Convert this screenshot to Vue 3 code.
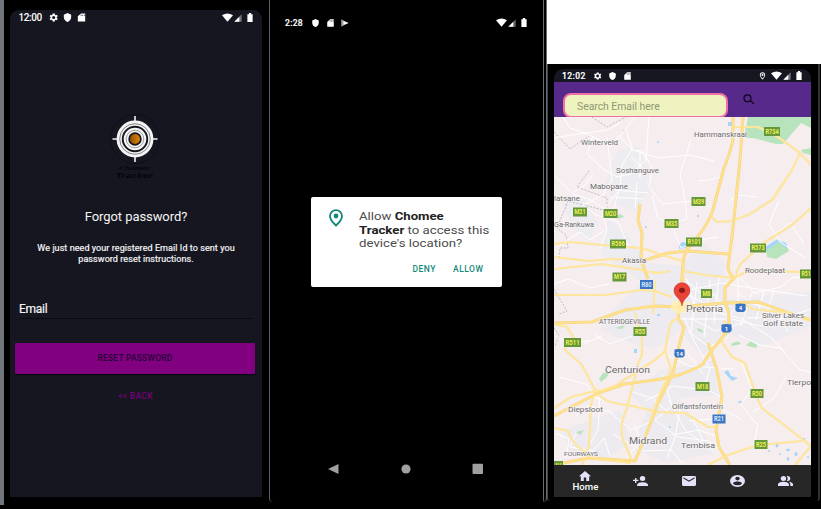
<script setup>
const majorRoads = [
  'M743 117L740 160L732 237L728 267Q729 274 734 278L725 288V303Q732 317 727 332L712 350L702 365Q687 373 672 377L655 380L625 384L598 393L575 405L554 416',
  'M733 117V140Q730 154 724 168L712 213Q704 231 692 243Q683 253 683 265L680 307',
  'M645 260L668 253L688 251L728 254',
  'M640 204L638 220L642 233L641 260L648 279',
  'M554 323L592 322L625 310L655 306L678 307L725 303L758 302Q785 312 811 320',
  'M680 307L678 318L684 327L678 350L673 373L658 403L648 430L635 461L605 459L588 458L554 465',
  'M708 343L717 370L722 397L716 430L719 447L730 465'
]
const roads = [
  'M712 217L717 222L732 221L750 214L772 200L792 170',
  'M811 208L792 225L765 242L745 260Q737 265 736 278',
  'M554 244L570 242L612 246L642 248L662 255L682 261L684 281',
  'M554 257L588 261L612 259L645 261M554 269L602 264L642 270Q655 275 670 271',
  'M683 271L705 275L734 278L748 271L811 272',
  'M554 295L605 295L642 290L655 291L672 297',
  'M655 281L653 314M678 319Q670 320 669 330L665 350L671 369L659 396L650 422',
  'M635 313L642 337V355Q636 366 635 377L627 408Q617 430 625 444L632 461',
  'M554 324L567 327L574 338L565 340L565 350L582 365L595 390L591 405L589 446L582 465',
  'M554 428L568 431Q572 443 582 450L595 459L631 463',
  'M598 393Q603 403 628 405L658 412L685 413L708 427L718 427',
  'M597 392L615 386L655 360L666 350',
  'M725 320L722 342L732 357L745 363L755 393L762 408L811 446L795 465',
  'M708 465L728 455L758 445L802 441',
  'M733 127L758 127L778 137L800 153L811 165M800 153L792 170L774 198',
  'M554 408L571 397L599 390',
  'M725 303Q744 302 752 309L790 313L811 321'
]
const streets = [
  'M563 117L570 128L590 135L611 146L626 129L635 117M626 130L633 150L658 158L690 155L714 161',
  'M554 138L578 134L608 130L621 122M593 136L587 154L603 169L617 177L631 174L646 160L649 117',
  'M607 137L612 180L603 195L583 205L596 215L618 222L629 247',
  'M618 135L632 149L622 165L620 189L602 212L607 230L600 248',
  'M630 150L642 151L652 167L649 187L663 204L692 201L711 207',
  'M652 195L658 218L670 224L687 219L685 200L680 174L691 140',
  'M674 230L681 248L700 240L718 237M698 181L710 180L721 177M729 201L738 195L757 197',
  'M778 202L769 225L780 242L805 258M765 242L790 223L804 244',
  'M556 177L573 194L591 200L609 212M573 193L586 184L593 174',
  'M615 190L648 193M610 197L644 199M621 183L613 211M637 182L635 208M640 151V178M631 157L647 172',
  'M684 278L699 292L715 295L728 315M687 279L694 305L713 312L740 318L769 336L785 352',
  'M684 291L722 283L757 289L807 296M738 271L738 304L728 318L761 326L811 309',
  'M688 295L724 313M697 282L691 332M710 280L704 338M719 276L714 323M690 318L716 331L742 323M676 319L726 319M688 331L709 347L727 337',
  'M739 293L750 303L775 309L788 332M752 292L741 326M764 291L756 320M774 290L763 325M746 318L779 317M738 335L760 345L780 348L800 370L811 372',
  'M684 317L695 343L710 369L704 388L721 397M686 351L703 374M660 352L689 366L734 369',
  'M559 377L586 384L596 398L628 406M575 417L588 406L610 412L631 430L651 422M600 392L598 430L584 455',
  'M630 391L652 398L672 386L699 389M662 374L672 406L655 420L678 437L708 441L719 449',
  'M645 401L666 391M653 399L669 413M634 425L641 441L627 457M613 434L643 451L671 450L684 465',
  'M669 400L685 430L714 452M680 409L675 438L667 458M691 415L703 440M689 421L711 419M672 435L699 430L718 437',
  'M740 360L752 388L741 405L758 425L753 448M753 412L773 399L786 377M723 410L741 419',
  'M556 433L569 439L566 458M576 433L570 447L593 451L604 438L610 456',
  'M555 336L572 344L590 340M595 335L610 344L632 336M584 344L602 336',
  'M557 247L580 232L590 240L604 231M554 284L569 279L590 288L609 284',
  'M740 277L754 293L781 287L793 277L811 278'
]
const greens = [
  'M748 117H811V128L801 123L795 130L783 144L776 144L753 138L745 138V132Z',
  'M801 150L811 148V155L803 153Z',
  'M766 250L777 239L785 244L789 251L776 259L767 257Z',
  'M616 216Q621 212 624 217L618 219Z',
  'M697 328Q704 329 703 333L698 331Z',
  'M731 344Q739 339 741 344L732 346Z',
  'M746 345L751 341L757 345L756 348L748 346Z',
  'M599 379L603 373L611 371L606 378L601 382Z',
  'M615 328L625 325L622 329Z',
  'M576 432L584 430L580 435Z'
]
const waters = ['M679 245L682 242L687 243L686 248L679 249Z', 'M724 372L728 370L731 376L738 378L732 381Z', 'M766 251L765 247L776 240L786 243L788 249L778 242Z', 'M634 349H637V353H634Z', 'M728 122H732V126H728Z', 'M657 314H660V316H657Z']
const ponds = [[777,445,1.5,2.5],[788,450,2,1.3],[796,454,1.5,2],[788,459,1.3,2],[780,454,1,1],[804,439,1.5,1],[808,457,1,1],[769,451,1,1],[624,131,1,1],[658,142,1,1],[698,216,1.2,1],[646,227,1,1],[670,427,1,1],[762,390,2,1],[740,402,2,1]]
const places = [
  [581,145,37,7,'Winterveld'], [694,136.5,53,7,'Hammanskraal'],
  [616,173,43,7,'Soshanguve'], [590,188.5,38,7,'Mabopane'],
  [554,201,26,7,'latsane'], [554,227,40,7,'Ga-Rankuwa'],
  [622,263,24,7,'Akasia'], [745,272.5,40,7,'Roodeplaat'],
  [686,312,37,9.5,'Pretoria'], [599,324.3,51,7,'ATTERIDGEVILLE'],
  [762,318,42,7,'Silver Lakes'], [763,326,40,7,'Golf Estate'],
  [605,373,45,9.5,'Centurion'], [568,411.5,35,7,'Diepsloot'],
  [672,409,51,7,'Olifantsfontein'], [787,384.5,24,7,'Tierpo'],
  [629,443.5,38,9.5,'Midrand'], [681,448,34,8,'Tembisa'],
  [564,456,34,6,'FOURWAYS']
]
const signs = [
  [764,127,16,'R734'], [573,207.5,14,'M21'], [603.5,209,14,'M20'], [691.5,197,14,'M39'],
  [664.5,219,14,'M35'], [610,239.5,16,'R566'], [686,237.5,16,'R101'], [750,243.5,16,'R573'],
  [800,269.5,12,'R51'], [612.5,272.5,14,'M17'], [640,280,13,'R80',true], [701,289,11,'M8'],
  [633.5,327,13,'R55'], [564,338,17,'R511'], [695.5,382,14,'M18'], [750.5,389,13,'R50'],
  [712.5,414.5,13,'R21',true], [754.5,440,13,'R25']
]
const shields = [[740.5,308,'4'], [726.5,328.5,'1'], [679.5,353.5,'14']]
</script>

<template>
  <svg class="defs" width="0" height="0">
    <symbol id="gear" viewBox="2 2 20 20"><path fill-rule="evenodd" d="M19.4 13a8 8 0 0 0 0-2l2.1-1.6-2-3.5-2.5 1a8 8 0 0 0-1.7-1L15 3h-5l-.4 2.8-1.8 1-2.4-1-2 3.5L5.5 11a8 8 0 0 0 0 2l-2.1 1.700 2 3.500 2.500-1 1.700 1L10 21h5l.3-2.800 1.800-1 2.400 1 2-3.500zM12.400 15.500a3.500 3.500 0 1 1 0-7 3.500 3.500 0 0 1 0 7z" /></symbol>
    <symbol id="shield" viewBox="1 1 22 22"><path d="M12 1L3 5v6c0 5.600 3.800 10.700 9 12 5.200-1.300 9-6.400 9-12V5z" /></symbol>
    <symbol id="sd" viewBox="1 1 22 22"><path fill-rule="evenodd" d="M21 2H11L3 9v13h18zM12 8h-2V5h2zm4 0h-2V5h2zm4 0h-2V5h2z" /></symbol>
    <symbol id="play" viewBox="1 1 22 22"><path d="M3 2l20 10L3 22z" opacity=".65" /><path d="M9 7l14 5-14 5z" /></symbol>
    <symbol id="wifi" viewBox="0 0 24 24" preserveAspectRatio="none"><path d="M0 6Q12-3 24 6L12 23z" /></symbol>
    <symbol id="signal" viewBox="0 0 24 24"><path d="M1 23L23 1v22z" opacity=".4" /><path d="M1 23L16 8v15z" /></symbol>
    <symbol id="battery" viewBox="0 0 16 24"><path d="M5 0h6v3h4v21H1V3h4z" /></symbol>
    <symbol id="pin" viewBox="0 0 24 24"><path fill-rule="evenodd" d="M12 1a8 8 0 0 0-8 8c0 6 8 14 8 14s8-8 8-14a8 8 0 0 0-8-8zm0 2.500a5.500 5.500 0 0 1 5.500 5.500c0 3.600-3.500 8-5.500 10.400C10 17 6.500 12.600 6.500 9A5.500 5.500 0 0 1 12 3.500zM12 6a3 3 0 1 0 0 6 3 3 0 0 0 0-6z" /></symbol>
    <symbol id="home" viewBox="2 3 20 17" preserveAspectRatio="none"><path d="M10 20v-6h4v6h5v-8h3L12 3 2 12h3v8z" /></symbol>
    <symbol id="add" viewBox="1 4 22 16" preserveAspectRatio="none"><path d="M15 12a4 4 0 1 0 0-8 4 4 0 0 0 0 8zm-9-2V7H4v3H1v2h3v3h2v-3h3v-2zm9 4c-2.700 0-8 1.300-8 4v2h16v-2c0-2.700-5.300-4-8-4z" /></symbol>
    <symbol id="mail" viewBox="2 4 20 16" preserveAspectRatio="none"><path d="M20 4H4a2 2 0 0 0-2 2v12c0 1 1 2 2 2h16c1 0 2-1 2-2V6a2 2 0 0 0-2-2zm0 4l-8 5-8-5V6l8 5 8-5z" /></symbol>
    <symbol id="account" viewBox="2 2 20 20" preserveAspectRatio="none"><path fill-rule="evenodd" d="M12 2a10 10 0 1 0 0 20 10 10 0 0 0 0-20zm0 3a3 3 0 1 1 0 6 3 3 0 0 1 0-6zm0 14.200A7.200 7.200 0 0 1 6 16c0-2 4-3.100 6-3.100s6 1.100 6 3.100a7.200 7.200 0 0 1-6 3.200z" /></symbol>
    <symbol id="group" viewBox="1 4 22 16" preserveAspectRatio="none"><path d="M16.700 13.100c1.400 1 2.300 2.200 2.300 3.900v3h4v-3c0-2.200-3.600-3.500-6.300-3.900zM9 12a4 4 0 1 0 0-8 4 4 0 0 0 0 8zm6 0a4 4 0 0 0 0-8l-1.300.2a6 6 0 0 1 0 7.600zm-6 1c-2.700 0-8 1.300-8 4v3h16v-3c0-2.700-5.300-4-8-4z" /></symbol>
  </svg>

  <main class="stage">
    <section class="phone first">
      <div class="screen forgot">
        <header class="status">
          <span class="clock">12:00</span>
          <svg class="i"><use href="#gear" /></svg><svg class="i"><use href="#shield" /></svg><svg class="i"><use href="#sd" /></svg>
          <span class="grow"></span>
          <svg class="wifi"><use href="#wifi" /></svg><svg class="sig"><use href="#signal" /></svg><svg class="bat"><use href="#battery" /></svg>
        </header>
        <svg class="logo" viewBox="0 0 54 70" width="54" height="70">
          <defs><linearGradient id="amber"><stop offset="0" stop-color="#925000" /><stop offset="1" stop-color="#df8500" /></linearGradient></defs>
          <circle cx="27" cy="27" r="24.500" fill="none" stroke="#08121c" />
          <g fill="none" stroke="#f4f4f4">
            <path d="M27 4v8M27 42v8M4.500 27h8M41.500 27h8" stroke-width="1.600" />
            <circle cx="27" cy="27" r="15.800" stroke-width="5.200" />
            <circle cx="27" cy="27" r="9" stroke-width="4.600" />
            <circle cx="27" cy="27" r="15.300" stroke="#55555c" stroke-width=".7" />
            <circle cx="27" cy="27" r="8.800" stroke="#66666c" stroke-width=".6" />
          </g>
          <circle cx="27" cy="27" r="5" fill="url(#amber)" />
          <text x="11" y="57.500" textLength="31" class="script" lengthAdjust="spacingAndGlyphs">Chomee</text>
          <text x="8" y="65.500" textLength="37" class="tracker" lengthAdjust="spacingAndGlyphs">Tracker</text>
        </svg>
        <h1>Forgot password?</h1>
        <p class="hint">We just need your registered Email Id to sent you<br>password reset instructions.</p>
        <div class="email">Email</div>
        <button class="reset">RESET PASSWORD</button>
        <a class="back">&lt;&lt; BACK</a>
      </div>
    </section>

    <section class="phone second">
      <header class="status">
        <span class="clock">2:28</span>
        <svg class="i"><use href="#shield" /></svg><svg class="i"><use href="#sd" /></svg><svg class="i"><use href="#play" /></svg>
        <span class="grow"></span>
        <svg class="wifi"><use href="#wifi" /></svg><svg class="sig"><use href="#signal" /></svg><svg class="bat"><use href="#battery" /></svg>
      </header>
      <div class="dialog">
        <svg class="locate" viewBox="0 0 16 18"><path d="M8 1.100a6 5.900 0 0 0-6 5.900c0 4.200 6 9.500 6 9.500s6-5.300 6-9.500a6 5.900 0 0 0-6-5.900z" fill="none" stroke="#15897a" stroke-width="1.900" /><circle cx="8" cy="7" r="2.400" fill="#15897a" /></svg>
        <div class="message">
          <span class="l1">Allow <b>Chomee</b></span>
          <span class="l2"><b>Tracker</b> to access this</span>
          <span class="l3">device's location?</span>
        </div>
        <div class="actions"><span>DENY</span><span>ALLOW</span></div>
      </div>
      <svg class="keys" viewBox="0 0 158 14"><path d="M1 7L11.500 2v10z" /><circle cx="79" cy="7" r="4.600" /><rect x="145.500" y="1.800" width="10.500" height="10.200" rx="1" /></svg>
    </section>

    <section class="right">
      <div class="phone third">
        <div class="screen tracker-app">
          <header class="status">
            <span class="clock">12:02</span>
            <svg class="i"><use href="#gear" /></svg><svg class="i"><use href="#shield" /></svg><svg class="i"><use href="#sd" /></svg>
            <span class="grow"></span>
            <svg class="place"><use href="#pin" /></svg><svg class="wifi"><use href="#wifi" /></svg><svg class="sig"><use href="#signal" /></svg><svg class="bat"><use href="#battery" /></svg>
          </header>
          <div class="search">
            <div class="field"><span>Search Email here</span></div>
            <svg class="lens" viewBox="0 0 12 11"><circle cx="4.500" cy="4.300" r="3.500" /><path d="M7.200 6.500L11 9.700" /></svg>
          </div>
          <svg class="map" viewBox="554 117 257 348" width="257" height="348">
            <rect x="554" y="117" width="257" height="348" fill="#f6edef" />
            <g fill="#ecebf0" opacity=".8">
              <path d="M616 153L635 145L646 163L651 190L635 211L616 205L605 183Z" /><path d="M563 203L582 197L598 223L589 241L573 228Z" />
              <path d="M609 218L625 233L648 263L680 266L703 243L725 262L725 300L811 291V326L760 347L729 333L701 356L680 330L655 349L629 342L600 330L609 313L642 282L602 255Z" />
              <path d="M663 370L716 360L718 395L678 398L704 434L715 453L666 463L633 448L647 411L627 391Z" /><path d="M562 430L620 410L632 443L604 460L569 452Z" />
            </g>
            <path v-for="g in greens" :key="g" :d="g" fill="#b7e3bd" />
            <path v-for="w in waters" :key="w" :d="w" fill="#a5d5fa" />
            <ellipse v-for="p in ponds" :key="p.join('-')" :cx="p[0]" :cy="p[1]" :rx="p[2]" :ry="p[3]" fill="#a5d5fa" />
            <path class="border" d="M554 132L570 149L589 136M592 117L607 127L626 117M589 171L577 187L607 198V211L568 201L557 228L566 235L568 248H560L559 258M554 289L567 311L559 314M554 328L559 335L555 347" />
            <path v-for="s in streets" :key="s" :d="s" class="street" />
            <path v-for="r in roads" :key="r" :d="r" class="road-edge" />
            <path v-for="r in majorRoads" :key="r" :d="r" class="major-edge" />
            <path v-for="r in roads" :key="'f' + r" :d="r" class="road" />
            <path v-for="r in majorRoads" :key="'f' + r" :d="r" class="major" />
            <path d="M674 300L692 303L691 310L678 314L670 308Z" fill="#fff0b0" opacity=".75" />
            <rect x="554" y="461" width="9" height="4" fill="#64983b" />
            <path d="M555.500 464h6" stroke="#d6dc4f" stroke-width="1.500" stroke-dasharray="1.500 .7" />
            <text v-for="p in places" :key="p[4]" :x="p[0]" :y="p[1]" :textLength="p[2]" :font-size="p[3]" lengthAdjust="spacingAndGlyphs" class="place-name">{{ p[4] }}</text>
            <g v-for="(s, k) in signs" :key="k">
              <rect :x="s[0]" :y="s[1]" :width="s[2]" height="9" :fill="s[4] ? '#3975c4' : '#64983b'" />
              <text :x="s[0] + s[2] / 2" :y="s[1] + 6.900" text-anchor="middle" :textLength="s[2] - 2.800" lengthAdjust="spacingAndGlyphs" :class="s[4] ? 'sign blue' : 'sign'">{{ s[3] }}</text>
            </g>
            <g v-for="s in shields" :key="s[2]" :transform="`translate(${s[0]} ${s[1]})`">
              <path d="M-5-4Q0-5 5-4L5-1Q6 3 3 4H-3Q-6 3-5-1Z" fill="#3975c4" /><text y="2.300" text-anchor="middle" class="shield-no">{{ s[2] }}</text>
            </g>
            <path d="M682 306C681 298 674 297 674 290.500A8 7.800 0 0 1 690 290.500C690 297 683 298 682 306Z" fill="#e94236" stroke="#c52e29" stroke-width=".5" />
            <ellipse cx="682" cy="290.300" rx="3" ry="2.600" fill="#861b19" />
          </svg>
          <nav>
            <div class="tab first-tab"><svg class="home"><use href="#home" /></svg><span>Home</span></div>
            <div v-for="n in ['add', 'mail', 'account', 'group']" :key="n" class="tab"><svg :class="n"><use :href="'#' + n" /></svg></div>
          </nav>
        </div>
      </div>
    </section>
  </main>
</template>

<style>
body { margin: 0; background: #000; }
</style>

<style scoped>
* { box-sizing: border-box; }
.defs { display: block; }
.stage { display: flex; width: 821px; height: 509px; background: #000; font-family: Roboto, "Liberation Sans", sans-serif; overflow: hidden; }
.phone { display: flex; flex-direction: column; }
.first { width: 269px; height: 505px; padding: 10px 7px 8px 6px; border-left: 4px solid #71757c; }
.screen { display: flex; flex-direction: column; overflow: hidden; }
.forgot { width: 252px; height: 487px; background: #161620; border-radius: 9px 9px 0 0; align-items: center; color: #f4f4f5; }
.status { display: flex; align-items: center; height: 15px; width: 100%; color: #fff; flex: none; }
.status svg { fill: #fff; flex: none; }
.clock { font-size: 10px; font-weight: 500; letter-spacing: -.4px; }
.i { width: 9px; height: 9px; }
.grow { flex: 1; }
.wifi { width: 11px; height: 9px; }
.sig { width: 8px; height: 8px; margin-left: 1px; }
.bat { width: 6px; height: 9px; margin-left: 5px; }
.forgot .status { padding: 0 9px 0 8.500px; }
.forgot .i { margin-left: 5.300px; }
.forgot .clock { width: 24px; }
.forgot .i:nth-of-type(1) { margin-left: 6px; }
.logo { margin-top: 87px; margin-left: -3px; flex: none; }
.script { font: italic 7px "Liberation Serif", serif; fill: #03080d; stroke: #03080d; stroke-width: .2px; }
.tracker { font: italic bold 7px "DejaVu Sans", sans-serif; fill: #03070c; }
h1 { margin: 26px 0 0; font-size: 13px; font-weight: 400; line-height: 18px; width: 252px; text-align: center; letter-spacing: -.08px; }
.hint { margin: 17px 0 0; width: 252px; font-size: 9px; line-height: 10.500px; text-align: center; font-weight: 400; letter-spacing: .07px; -webkit-text-stroke: .2px #f4f4f5; }
.email { margin-top: 36px; width: 234px; height: 19px; line-height: 19px; font-size: 12px; border-bottom: 1px solid #0a0b12; letter-spacing: -.25px; -webkit-text-stroke: .2px #f4f4f5; }
.reset { margin: 23.500px 2px 0 0; flex: none; width: 240px; height: 31px; border: 0; border-radius: 1px; background: #810080; color: #270039; font: 500 8.500px Roboto, sans-serif; letter-spacing: .2px; box-shadow: 0 1px 1px #080611; padding: 0; }
.back { margin-top: 16px; margin-right: 1px; color: #780078; font-size: 8.500px; line-height: 12px; letter-spacing: .3px; font-weight: 500; }
.second { width: 278px; height: 502px; align-items: center; border-left: 1px solid #5d6065; border-right: 4px double #686b70; border-radius: 0 0 4px 4px; padding-top: 15px; }
.second .status { padding: 0 16px 0 15px; }
.second .clock { width: 20px; font-size: 8.500px; letter-spacing: .3px; }
.second .clock, .tracker-app .clock { -webkit-text-stroke: .2px #fff; }
.second .i { height: 8px; margin-left: 5.500px; }
.second .i:nth-of-type(1) { margin-left: 6px; }
.dialog { display: grid; grid-template-columns: 48px 1fr; grid-template-rows: 64px 20px; width: 191px; height: 90px; margin-top: 167px; margin-right: 1px; background: #fff; border-radius: 2px; color: #4c4c4c; }
.locate { width: 16px; height: 18px; margin: 12px 0 0 17px; }
.message { padding-top: 13px; font-size: 11.500px; line-height: 13.500px; white-space: nowrap; }
.message span { display: block; transform-origin: left; }
.l1 { transform: scaleX(1.145); }
.l2, .l3 { transform: scaleX(1.150); }
.message b { color: #222; font-weight: 700; }
.actions { grid-column: 1 / 3; display: flex; gap: 17px; justify-content: flex-end; padding: 0 18px 0 0; color: #15897a; font-size: 8.500px; line-height: 16px; letter-spacing: .52px; font-weight: 500; }
.keys { width: 158px; height: 14px; margin: 175px 2px 0 0; fill: #a0a0a0; }
.right { width: 274px; background: linear-gradient(#fff 64px, #000 64px); }
.third { width: 273px; height: 437px; margin-top: 64px; border-left: 1px solid #42454a; border-right: 2px solid #303237; padding: 5px 0 0 6px; border-radius: 0 0 3px 3px; background: #000; }
.tracker-app { width: 257px; height: 428px; border-radius: 9px 9px 0 0; background: #171722; }
.tracker-app .status { height: 13px; padding: 0 9px 0 8px; }
.tracker-app .clock { width: 25px; font-size: 8.500px; letter-spacing: .45px; }
.tracker-app .i { height: 8px; margin-left: 6px; }
.place { width: 9px; height: 8px; margin-right: 4px; }
.search { display: flex; align-items: flex-start; height: 35px; background: #57298b; padding: 11px 0 0 9px; flex: none; }
.field { width: 165px; height: 25px; flex: none; background: #eff3bf; border: 2px solid #f06fa5; border-radius: 8px; padding: 4px 0 0 12px; color: #8e9875; font-size: 10px; line-height: 15px; }
.field span { display: inline-block; transform: scaleX(1.035); transform-origin: left; white-space: nowrap; }
.lens { width: 12px; height: 11px; margin: 1px 0 0 15px; fill: none; stroke: #0c0418; stroke-width: 1.200; }
.map { display: block; flex: none; }
.street { fill: none; stroke: #fff; stroke-width: 1; stroke-linejoin: round; }
.border { fill: none; stroke: #aaa6ab; stroke-width: .7; stroke-dasharray: 2 1.500; }
.road, .major, .road-edge, .major-edge { fill: none; stroke-linejoin: round; }
.road-edge { stroke: #fae2a0; stroke-width: 2.200; }
.road { stroke: #ffe79d; stroke-width: 1.400; }
.major-edge { stroke: #f5d384; stroke-width: 3; }
.major { stroke: #ffe18b; stroke-width: 2; }
.place-name { fill: #68686d; stroke: #faf6f5; stroke-width: 1.200px; paint-order: stroke; }
.sign { font-size: 7px; font-weight: 700; fill: #f0ee55; }
.blue { fill: #dce9ff; }
.shield-no { font-size: 6px; font-weight: 700; fill: #fff; }
nav { display: flex; height: 32px; flex: none; background: #272727; padding-right: 1px; }
.tab { flex: 1; display: flex; flex-direction: column; align-items: center; justify-content: center; color: #fff; font-size: 8.500px; line-height: 9px; }
.tab.first-tab { flex: 0 0 62px; }
.tab svg { width: 15px; height: 10px; fill: #e6e0f8; }
.tab svg.home { width: 12px; height: 10px; margin-bottom: 2px; }
.tab svg.mail { width: 14px; }
.tab svg.account { width: 15px; height: 12px; }
.tab span { transform: scaleX(1.130); font-weight: 500; }
</style>
